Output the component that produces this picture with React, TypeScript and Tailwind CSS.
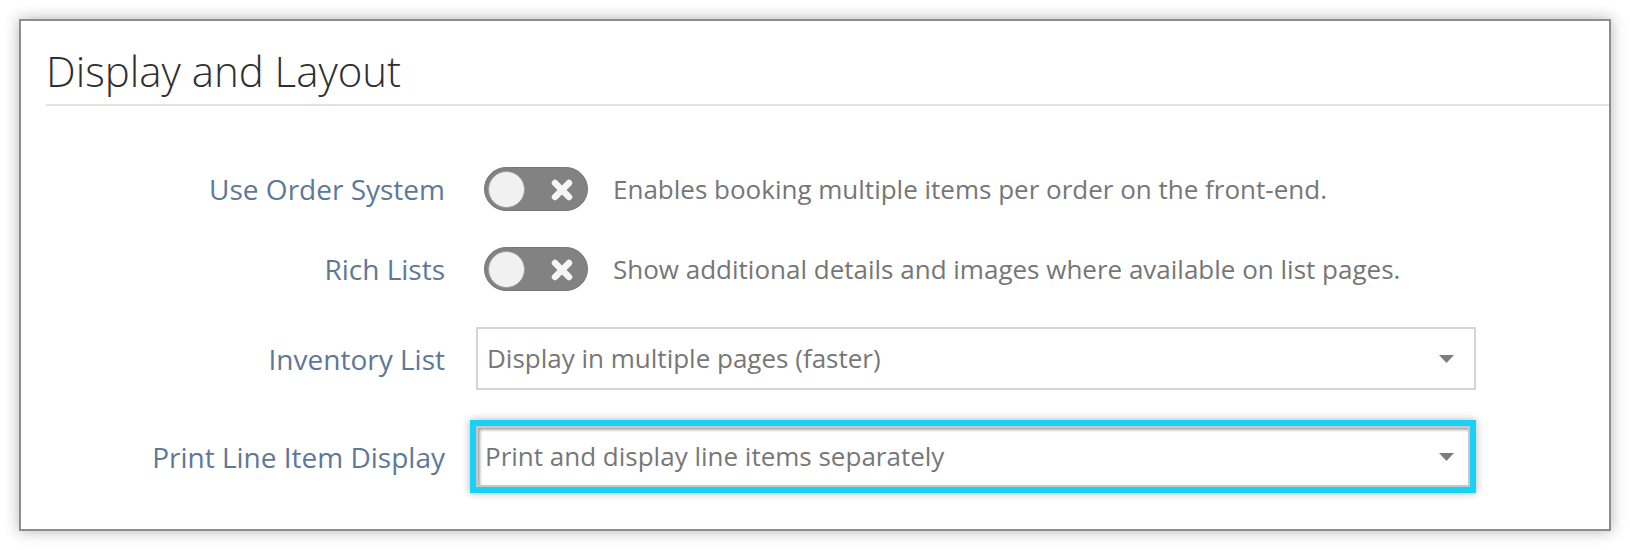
import React from 'react';

const font = { fontFamily: '"Open Sans", "Liberation Sans", sans-serif' };

const Toggle = () => (
  <div className="relative flex h-[44px] w-[104px] shrink-0 items-center rounded-full border border-[#777] bg-[#828282] px-[3px]">
    <div className="h-[37px] w-[37px] rounded-full border border-[#9a9a9a] bg-[#f1f1f1]" />
    <svg className="absolute left-[66px] top-[11px] h-[22px] w-[22px]" viewBox="0 0 22 22">
      <path d="M4 4 L18 18 M18 4 L4 18" stroke="#f6f6f6" strokeWidth="6.5" strokeLinecap="round" />
    </svg>
  </div>
);

const Caret = () => (
  <svg className="h-[8px] w-[15px] shrink-0" viewBox="0 0 15 8">
    <path d="M0 0 H15 L7.5 8 Z" fill="#7d7d7d" />
  </svg>
);

const ToggleRow = ({ label, text }) => (
  <div className="flex items-center">
    <div className="w-[424px] text-right text-[28px] text-[#5e7898]">{label}</div>
    <div className="ml-[39px]">
      <Toggle />
    </div>
    <div className="ml-[25px] text-[26px] text-[#767676]">{text}</div>
  </div>
);

export default function App() {
  return (
    <div className="min-h-[550px] bg-white pl-[19px] pt-[19px]" style={font}>
      <div className="h-[512px] w-[1592px] border-2 border-[#8d8d8d] bg-white shadow-[0_0_14px_rgba(0,0,0,0.3)]">
        {/* Heading */}
        <div className="ml-[25px] mt-[24px] border-b-2 border-[#e2e2e2] pb-[7px]">
          <h2 className="text-[42px] font-light leading-[52px] text-[#2f2f2f]">Display and Layout</h2>
        </div>

        <div className="mt-[61px] flex flex-col gap-[36px]">
          <ToggleRow label="Use Order System" text="Enables booking multiple items per order on the front-end." />
          <ToggleRow label="Rich Lists" text="Show additional details and images where available on list pages." />

          {/* Inventory List */}
          <div className="flex items-center">
            <div className="w-[424px] text-right text-[28px] text-[#5e7898]">Inventory List</div>
            <div className="ml-[31px] flex h-[63px] w-[1000px] items-center justify-between border-2 border-[#d5d5d5] bg-white pl-[9px] pr-[20px]">
              <span className="text-[26px] text-[#777]">Display in multiple pages (faster)</span>
              <Caret />
            </div>
          </div>

          {/* Print Line Item Display */}
          <div className="flex items-center">
            <div className="w-[424px] text-right text-[28px] text-[#5e7898]">Print Line Item Display</div>
            <div className="ml-[25px] -my-[6px] border-[6px] border-[#16d2f6] shadow-[0_0_8px_rgba(0,0,0,0.3)]">
              <div className="flex h-[61px] w-[994px] items-center justify-between border-2 border-[#c8c8c8] bg-white pl-[7px] pr-[14px] shadow-[inset_2px_2px_3px_rgba(0,0,0,0.35)]">
                <span className="text-[26px] text-[#777]">Print and display line items separately</span>
                <Caret />
              </div>
            </div>
          </div>
        </div>
      </div>
    </div>
  );
}
